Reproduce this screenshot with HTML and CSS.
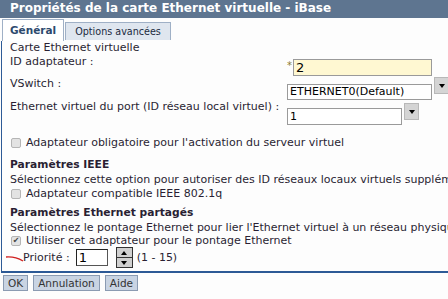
FILE: index.html
```html
<!DOCTYPE html>
<html lang="fr">
<head>
    <meta charset="UTF-8">
    <title>Propriétés de la carte Ethernet virtuelle</title>
    <link rel="stylesheet" href="styles.css">
</head>
<body>
    <div class="dialog">
        <div class="title-bar">Propriétés de la carte Ethernet virtuelle - iBase</div>
        <div class="tabs">
            <div class="tab active">Général</div>
            <div class="tab">Options avancées</div>
        </div>
        <div class="panel">
            <div class="line">Carte Ethernet virtuelle</div>
            <div class="row row-id">
                <div class="label">ID adaptateur :</div>
                <div class="field">
                    <span class="required">*</span>
                    <div class="input input-yellow">2</div>
                </div>
            </div>
            <div class="row row-vswitch">
                <div class="label">VSwitch :</div>
                <div class="field">
                    <div class="input select-wide">ETHERNET0(Default)</div>
                    <div class="drop"><span class="tri-down"></span></div>
                </div>
            </div>
            <div class="row row-port">
                <div class="label">Ethernet virtuel du port (ID réseau local virtuel) :</div>
                <div class="field">
                    <div class="input select-narrow">1</div>
                    <div class="drop"><span class="tri-down"></span></div>
                </div>
            </div>
            <div class="check check-first"><span class="box"></span>Adaptateur obligatoire pour l'activation du serveur virtuel</div>

            <div class="section-title">Paramètres IEEE</div>
            <div class="line line-after">Sélectionnez cette option pour autoriser des ID réseaux locaux virtuels supplémentaires</div>
            <div class="check"><span class="box"></span>Adaptateur compatible IEEE 802.1q</div>

            <div class="section-title section-gap">Paramètres Ethernet partagés</div>
            <div class="line line-after">Sélectionnez le pontage Ethernet pour lier l'Ethernet virtuel à un réseau physique</div>
            <div class="check check-tight"><span class="box checked">&#10004;</span>Utiliser cet adaptateur pour le pontage Ethernet</div>
            <div class="priority">
                <svg class="squiggle" width="18" height="8" viewBox="0 0 18 8"><path d="M0 2 C6 1.5 12 3 17 6" stroke="#d02020" stroke-width="1.4" fill="none"/></svg>
                <span>Priorité :</span>
                <div class="input input-small">1</div>
                <div class="spinner">
                    <div class="spin"><span class="tri-up"></span></div>
                    <div class="spin"><span class="tri-down"></span></div>
                </div>
                <span class="range">(1 - 15)</span>
            </div>
        </div>
        <div class="buttons">
            <button class="btn">OK</button>
            <button class="btn">Annulation</button>
            <button class="btn">Aide</button>
        </div>
    </div>
</body>
</html>
```

FILE: styles.css
```css
:root {
    --title: #5e7590;
    --text: #2a1f33;
    --panel-border: #2d5a96;
    --tab-border: #9fb0c6;
    --tab-bg: #dfe6ef;
    --field-border: #9a9a9a;
}

* {
    margin: 0;
    padding: 0;
    box-sizing: border-box;
}

body {
    background: #fdfdfd;
    font-family: "DejaVu Sans", Verdana, sans-serif;
    font-size: 11px;
    color: var(--text);
    width: 448px;
    height: 299px;
    overflow: hidden;
}

.dialog {
    width: 460px;
}

.title-bar {
    background: var(--title);
    color: #fff;
    font-weight: bold;
    font-size: 12px;
    height: 18px;
    line-height: 17px;
    padding-left: 10px;
    white-space: nowrap;
}

.tabs {
    display: flex;
    align-items: flex-end;
    height: 22px;
    margin-top: 1px;
    padding-left: 2px;
}

.tab {
    border: 1px solid var(--tab-border);
    border-bottom: none;
    background: var(--tab-bg);
    height: 18px;
    line-height: 17px;
    padding: 0 9px;
    margin-left: 1px;
    margin-bottom: 1px;
    font-size: 9.6px;
    color: #1b2a40;
}

.tab.active {
    background: #fff;
    height: 22px;
    line-height: 21px;
    margin: 0;
    font-weight: bold;
    font-size: 10.5px;
    color: #2d4a6e;
    padding: 0 7px;
}

.panel {
    border-left: 1px solid var(--panel-border);
    border-bottom: 2px solid var(--panel-border);
    margin-left: 1px;
    padding: 0 0 3px 8px;
    white-space: nowrap;
}

.line {
    line-height: 14px;
}

.line-after {
    margin-top: 1px;
}

.row {
    display: flex;
    align-items: flex-start;
}

.label {
    width: 277px;
    line-height: 14px;
}

.field {
    display: flex;
    align-items: flex-start;
}

.row-id .field {
    margin-top: 4px;
}

.required {
    width: 6px;
    color: #8a7a30;
    font-size: 10px;
    line-height: 14px;
}

.input {
    border: 1px solid var(--field-border);
    background: #fff;
    height: 17px;
    line-height: 15px;
    padding-left: 2px;
    font-size: 11px;
    color: #000;
}

.input-yellow {
    background: #fff8d2;
    width: 139px;
    font-size: 13px;
}

.row-vswitch {
    margin-top: 1px;
}

.row-vswitch .input {
    margin-top: 7px;
    height: 16px;
    line-height: 14px;
}

.select-wide {
    width: 145px;
}

.select-narrow {
    width: 115px;
}

.row-port .field {
    margin-top: 3px;
}

.row-port .input {
    margin-top: 5px;
}

.drop {
    width: 15px;
    height: 17px;
    margin-left: 2px;
    background: #d4d4d4;
    border: 1px solid #b8b8b8;
    display: flex;
    align-items: center;
    justify-content: center;
}

.tri-down {
    width: 0;
    height: 0;
    border-left: 3.5px solid transparent;
    border-right: 3.5px solid transparent;
    border-top: 4px solid #000;
}

.tri-up {
    width: 0;
    height: 0;
    border-left: 3.5px solid transparent;
    border-right: 3.5px solid transparent;
    border-bottom: 4px solid #000;
}

.check {
    display: flex;
    align-items: center;
    line-height: 14px;
}

.check-first {
    margin-top: 11px;
}

.check-tight {
    margin-top: -1px;
}

.box {
    width: 10px;
    height: 10px;
    border: 1px solid #b5b5b5;
    border-radius: 2px;
    background: #e3e3e3;
    margin-left: 1px;
    margin-right: 5px;
    font-size: 8px;
    line-height: 8px;
    text-align: center;
    color: #444;
}

.section-title {
    font-weight: bold;
    font-size: 10.7px;
    line-height: 14px;
    margin-top: 8px;
}

.section-gap {
    margin-top: 5px;
}

.priority {
    display: flex;
    align-items: center;
    height: 21px;
    margin-left: -4px;
    margin-top: -1px;
}

.squiggle {
    margin-right: -1px;
    margin-top: 2px;
}

.input-small {
    width: 32px;
    height: 17px;
    margin-left: 6px;
    border: 1px solid #555;
    border-top-color: #222;
    border-left-color: #222;
    font-size: 13px;
}

.spinner {
    margin-left: 8px;
    border: 1px solid #333;
    background: #333;
    display: flex;
    flex-direction: column;
    gap: 1px;
}

.spin {
    width: 15px;
    height: 9px;
    background: #d0d0d0;
    display: flex;
    align-items: center;
    justify-content: center;
}

.range {
    margin-left: 4px;
}

.buttons {
    display: flex;
    gap: 5px;
    padding: 2px 0 0 3px;
}

.btn {
    font-family: "DejaVu Sans", Verdana, sans-serif;
    font-size: 10.5px;
    color: #333;
    background: #c9d4e3;
    border: 1px solid #8b9bb2;
    height: 16px;
    padding: 0 4px;
}
```
